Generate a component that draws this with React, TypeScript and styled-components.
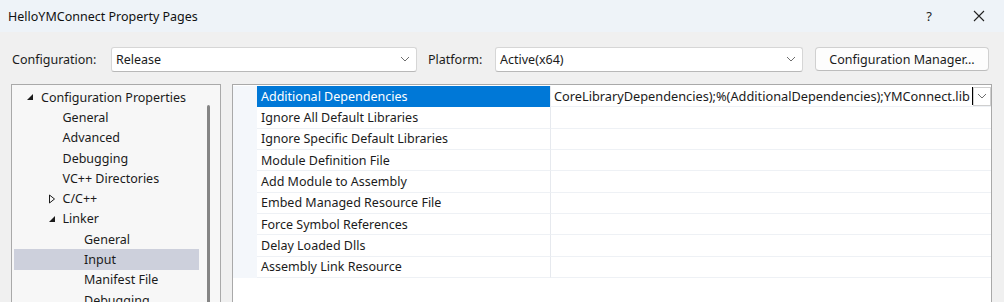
import styled, { createGlobalStyle } from "styled-components";

const Global = createGlobalStyle`
    html, body {
        margin: 0;
        padding: 0;
        background: #f0f0f0;
    }
    #root {
        width: 1004px;
        height: 302px;
        overflow: hidden;
    }
`;

const Window = styled.div`
    width: 1004px;
    height: 302px;
    display: flex;
    flex-direction: column;
    background: #f0f0f0;
    font-family: "Noto Sans", "Open Sans", sans-serif;
    font-size: 12.5px;
    color: #1b1b1b;
    overflow: hidden;
`;

const TitleBar = styled.div`
    height: 32px;
    flex-shrink: 0;
    display: flex;
    align-items: center;
    background: #eef3f8;
    padding-left: 8px;
`;

const Title = styled.span`
    flex: 1;
    font-size: 12.5px;
    color: #111;
`;

const TitleButton = styled.div`
    width: 50px;
    height: 32px;
    display: flex;
    align-items: center;
    justify-content: center;
    font-size: 13px;
    color: #222;
`;

const Toolbar = styled.div`
    display: flex;
    align-items: center;
    height: 26px;
    margin-top: 14px;
    padding-left: 12px;
`;

const Label = styled.span<{ $width: number }>`
    width: ${(p) => p.$width}px;
    flex-shrink: 0;
`;

const Combo = styled.div<{ $width: number }>`
    width: ${(p) => p.$width}px;
    height: 25px;
    box-sizing: border-box;
    background: #fff;
    border: 1px solid #d6d6d6;
    border-bottom-color: #b8b8b8;
    border-radius: 3px;
    display: flex;
    align-items: center;
    justify-content: space-between;
    padding: 0 6px 0 4px;
    flex-shrink: 0;
`;

const Gap = styled.div<{ $width: number }>`
    width: ${(p) => p.$width}px;
    flex-shrink: 0;
`;

const Button = styled.div`
    width: 174px;
    height: 24px;
    box-sizing: border-box;
    background: #fdfdfd;
    border: 1px solid #d0d0d0;
    border-bottom-color: #bdbdbd;
    border-radius: 4px;
    display: flex;
    align-items: center;
    justify-content: center;
    flex-shrink: 0;
`;

const Content = styled.div`
    display: flex;
    gap: 11px;
    margin-top: 12px;
    padding-left: 11px;
    flex: 1;
    min-height: 0;
`;

const TreePanel = styled.div`
    width: 210px;
    flex-shrink: 0;
    box-sizing: border-box;
    border: 1px solid #a9a9a9;
    border-bottom: none;
    background: #f7f7f7;
    display: flex;
`;

const TreeList = styled.div`
    flex: 1;
    padding-top: 2px;
    padding-left: 2px;
`;

const TreeRow = styled.div<{ $level: number; $selected?: boolean }>`
    height: 20.3px;
    display: flex;
    align-items: center;
    padding-left: ${(p) => 7 + p.$level * 21.5}px;
    background: ${(p) => (p.$selected ? "#cdd0dc" : "transparent")};
    margin-right: 3px;
    white-space: nowrap;
`;

const Twisty = styled.span`
    width: 20px;
    flex-shrink: 0;
    display: flex;
    align-items: center;
    padding-left: 5px;
    box-sizing: border-box;
`;

const ScrollTrack = styled.div`
    width: 18px;
    flex-shrink: 0;
    display: flex;
    justify-content: center;
    padding-top: 20px;
    padding-right: 6px;
    box-sizing: border-box;
`;

const ScrollThumb = styled.div`
    width: 3px;
    height: 200px;
    border-radius: 2px;
    background: #858585;
`;

const PropPanel = styled.div`
    width: 760px;
    flex-shrink: 0;
    box-sizing: border-box;
    border: 1px solid #a9a9a9;
    border-bottom: none;
    background: #fff;
    padding-top: 1px;
`;

const PropRow = styled.div`
    display: grid;
    grid-template-columns: 24px 293px 1fr;
    height: 21.33px;
`;

const Gutter = styled.div`
    background: #f4f7fb;
`;

const NameCell = styled.div<{ $selected?: boolean }>`
    display: flex;
    align-items: center;
    padding-left: 4px;
    background: ${(p) => (p.$selected ? "#0078d7" : "#fff")};
    color: ${(p) => (p.$selected ? "#fff" : "#1b1b1b")};
    border-bottom: 1px solid ${(p) => (p.$selected ? "#0078d7" : "#eef1f5")};
    box-sizing: border-box;
    white-space: nowrap;
`;

const ValueCell = styled.div`
    display: flex;
    align-items: center;
    border-left: 1px solid #e6e9ee;
    border-bottom: 1px solid #eef1f5;
    box-sizing: border-box;
    padding-left: 3px;
    white-space: nowrap;
    overflow: hidden;
`;

const ValueText = styled.span`
    flex: 1;
    overflow: hidden;
    font-size: 12.75px;
    border-right: 1px solid #000;
`;

const DropButton = styled.div`
    width: 18px;
    height: 19px;
    box-sizing: border-box;
    border: 1px solid #cfcfcf;
    background: #fff;
    display: flex;
    align-items: center;
    justify-content: center;
    flex-shrink: 0;
`;

function Chevron({ color = "#6e6e6e" }: { color?: string }) {
    return (
        <svg width="10" height="6" viewBox="0 0 10 6">
            <path d="M1 1 L5 5 L9 1" fill="none" stroke={color} strokeWidth="1" />
        </svg>
    );
}

function Expanded() {
    return (
        <svg width="8" height="8" viewBox="0 0 8 8">
            <polygon points="7,1 7,7 1,7" fill="#1b1b1b" />
        </svg>
    );
}

function Collapsed() {
    return (
        <svg width="8" height="10" viewBox="0 0 8 10">
            <polygon points="1.5,1 6.5,5 1.5,9" fill="none" stroke="#1b1b1b" strokeWidth="1" />
        </svg>
    );
}

function CloseIcon() {
    return (
        <svg width="12" height="12" viewBox="0 0 12 12">
            <path d="M1 1 L11 11 M11 1 L1 11" stroke="#222" strokeWidth="1.1" />
        </svg>
    );
}

type TreeItem = {
    label: string;
    level: number;
    twisty?: "open" | "closed";
    selected?: boolean;
};

const tree: TreeItem[] = [
    { label: "Configuration Properties", level: 0, twisty: "open" },
    { label: "General", level: 1 },
    { label: "Advanced", level: 1 },
    { label: "Debugging", level: 1 },
    { label: "VC++ Directories", level: 1 },
    { label: "C/C++", level: 1, twisty: "closed" },
    { label: "Linker", level: 1, twisty: "open" },
    { label: "General", level: 2 },
    { label: "Input", level: 2, selected: true },
    { label: "Manifest File", level: 2 },
    { label: "Debugging", level: 2 },
];

const props = [
    "Additional Dependencies",
    "Ignore All Default Libraries",
    "Ignore Specific Default Libraries",
    "Module Definition File",
    "Add Module to Assembly",
    "Embed Managed Resource File",
    "Force Symbol References",
    "Delay Loaded Dlls",
    "Assembly Link Resource",
];

export default function App() {
    return (
        <Window>
            <Global />
            <TitleBar>
                <Title>HelloYMConnect Property Pages</Title>
                <TitleButton>?</TitleButton>
                <TitleButton>
                    <CloseIcon />
                </TitleButton>
            </TitleBar>

            <Toolbar>
                <Label $width={99}>Configuration:</Label>
                <Combo $width={306}>
                    <span>Release</span>
                    <Chevron />
                </Combo>
                <Gap $width={11} />
                <Label $width={67}>Platform:</Label>
                <Combo $width={308}>
                    <span>Active(x64)</span>
                    <Chevron />
                </Combo>
                <Gap $width={12} />
                <Button>Configuration Manager...</Button>
            </Toolbar>

            <Content>
                <TreePanel>
                    <TreeList>
                        {tree.map((t, i) => (
                            <TreeRow key={i} $level={t.level} $selected={t.selected}>
                                <Twisty>
                                    {t.twisty === "open" && <Expanded />}
                                    {t.twisty === "closed" && <Collapsed />}
                                </Twisty>
                                {t.label}
                            </TreeRow>
                        ))}
                    </TreeList>
                    <ScrollTrack>
                        <ScrollThumb />
                    </ScrollTrack>
                </TreePanel>

                <PropPanel>
                    {props.map((name, i) => (
                        <PropRow key={name}>
                            <Gutter />
                            <NameCell $selected={i === 0}>{name}</NameCell>
                            <ValueCell>
                                {i === 0 && (
                                    <>
                                        <ValueText>
                                            CoreLibraryDependencies);%(AdditionalDependencies);YMConnect.lib
                                        </ValueText>
                                        <DropButton>
                                            <Chevron />
                                        </DropButton>
                                    </>
                                )}
                            </ValueCell>
                        </PropRow>
                    ))}
                </PropPanel>
            </Content>
        </Window>
    );
}
